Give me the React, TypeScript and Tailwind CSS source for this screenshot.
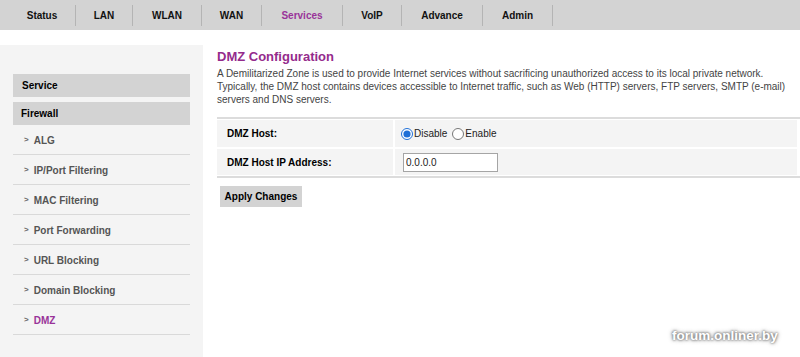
const TABS = [
  { label: 'Status', w: 'w-[67px]' },
  { label: 'LAN', w: 'w-[57px]' },
  { label: 'WLAN', w: 'w-[69px]' },
  { label: 'WAN', w: 'w-[60px]' },
  { label: 'Services', w: 'w-[81px]', active: true },
  { label: 'VoIP', w: 'w-[59px]' },
  { label: 'Advance', w: 'w-[81px]' },
  { label: 'Admin', w: 'w-[70px]' },
];

const FIREWALL_ITEMS = [
  'ALG',
  'IP/Port Filtering',
  'MAC Filtering',
  'Port Forwarding',
  'URL Blocking',
  'Domain Blocking',
  'DMZ',
];

export default function App() {
  return (
    <div className="relative h-[357px] w-[800px] overflow-hidden bg-white font-['Liberation_Sans',Arial,sans-serif] text-black">
      {/* top navigation */}
      <nav className="flex h-[30px] items-center bg-[#d3d3d3] pl-[9px]">
        {TABS.map((tab) => (
          <div
            key={tab.label}
            className={`flex h-[21px] items-center justify-center border-r border-[#b4b4b4] text-[10px] font-bold ${tab.w} ${
              tab.active ? 'text-[#993399]' : 'text-[#111]'
            }`}
          >
            {tab.label}
          </div>
        ))}
      </nav>

      <div className="mt-[15px] flex h-[312px]">
        {/* sidebar */}
        <aside className="w-[203px] shrink-0 bg-[#f4f4f4] px-[13px] pt-[29px]">
          <div className="flex h-[23px] items-center bg-[#d3d3d3] pl-[9px] text-[10px] font-bold">
            Service
          </div>
          <div className="mt-[5px] flex h-[23px] items-center bg-[#d3d3d3] pl-[8px] text-[10px] font-bold">
            Firewall
          </div>
          {FIREWALL_ITEMS.map((item) => (
            <div
              key={item}
              className={`flex h-[30px] items-center border-b border-[#d9d9d9] pl-[11px] pt-[1px] text-[10px] font-bold ${
                item === 'DMZ' ? 'text-[#993399]' : 'text-[#555]'
              }`}
            >
              <span className="mr-[5px] text-[8px] text-[#666]">&gt;</span>
              {item}
            </div>
          ))}
        </aside>

        {/* main content */}
        <main className="flex-1 pl-[14px] pt-[4px]">
          <h1 className="text-[13px] font-bold leading-[16px] text-[#942b8c]">DMZ Configuration</h1>
          <p className="mt-[2px] pr-[2px] text-[10px] leading-[13px] text-[#444]">
            A Demilitarized Zone is used to provide Internet services without sacrificing unauthorized access to its local
            private network. Typically, the DMZ host contains devices accessible to Internet traffic, such as Web (HTTP)
            servers, FTP servers, SMTP (e-mail) servers and DNS servers.
          </p>

          <div className="mt-[11px] border-y-2 border-[#dcdcdc] py-[1px] pr-[3px]">
            <div className="flex h-[27px] gap-[2px]">
              <div className="flex w-[176px] items-center bg-[#f4f4f4] pl-[10px] text-[10px] font-bold">DMZ Host:</div>
              <div className="flex flex-1 items-center bg-[#f4f4f4] pl-[6px] text-[10px] text-[#222]">
                <input type="radio" name="dmz" defaultChecked className="m-0 h-[12px] w-[12px] accent-[#1f6fd6]" />
                <span className="ml-[1px]">Disable</span>
                <input type="radio" name="dmz" className="m-0 ml-[5px] h-[12px] w-[12px]" />
                <span className="ml-[1px]">Enable</span>
              </div>
            </div>
            <div className="mt-[2px] flex h-[26px] gap-[2px]">
              <div className="flex w-[176px] items-center bg-[#f4f4f4] pl-[10px] text-[10px] font-bold">
                DMZ Host IP Address:
              </div>
              <div className="flex flex-1 items-center bg-[#f4f4f4] pl-[8px]">
                <input
                  defaultValue="0.0.0.0"
                  className="h-[19px] w-[95px] border border-[#a5a5a5] bg-white px-[2px] text-[10px] text-[#222] outline-none"
                />
              </div>
            </div>
          </div>

          <button className="ml-[3px] mt-[8px] flex h-[21px] w-[82px] items-center justify-center bg-[#d3d3d3] text-[10px] font-bold">
            Apply Changes
          </button>
        </main>
      </div>

      {/* watermark */}
      <div className="absolute left-[672px] top-[326px] text-[13.5px] font-bold text-white [text-shadow:0_0_3px_#777,0_0_2px_#888,0_0_5px_#999]">
        forum.onliner.by
      </div>
    </div>
  );
}
